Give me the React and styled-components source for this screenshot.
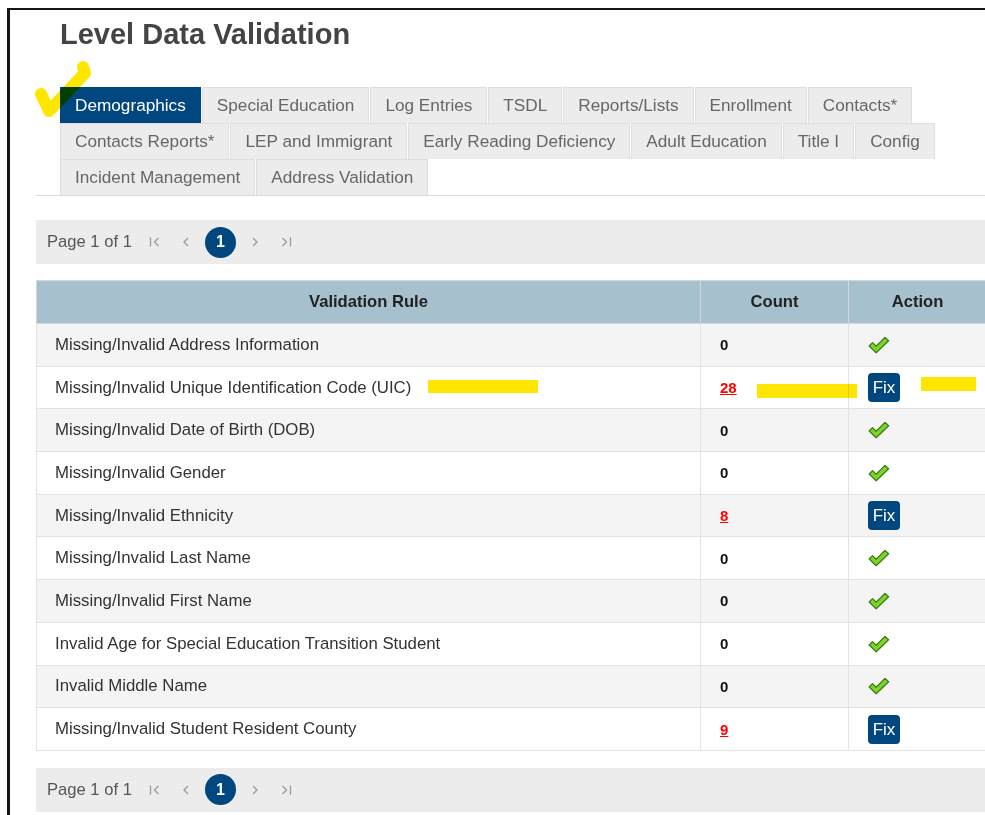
import React from 'react'
import styled, { createGlobalStyle } from 'styled-components'

const tabs = [
    'Demographics', 'Special Education', 'Log Entries', 'TSDL', 'Reports/Lists', 'Enrollment', 'Contacts*',
    'Contacts Reports*', 'LEP and Immigrant', 'Early Reading Deficiency', 'Adult Education', 'Title I', 'Config',
    'Incident Management', 'Address Validation',
]

const rules = [
    { name: 'Missing/Invalid Address Information', count: 0 },
    { name: 'Missing/Invalid Unique Identification Code (UIC)', count: 28 },
    { name: 'Missing/Invalid Date of Birth (DOB)', count: 0 },
    { name: 'Missing/Invalid Gender', count: 0 },
    { name: 'Missing/Invalid Ethnicity', count: 8 },
    { name: 'Missing/Invalid Last Name', count: 0 },
    { name: 'Missing/Invalid First Name', count: 0 },
    { name: 'Invalid Age for Special Education Transition Student', count: 0 },
    { name: 'Invalid Middle Name', count: 0 },
    { name: 'Missing/Invalid Student Resident County', count: 9 },
]

const GlobalStyle = createGlobalStyle`
    body {
        margin: 0;
        background: #fff;
        font-family: "Liberation Sans", Arial, sans-serif;
        overflow: hidden;
    }
`

function FirstIcon() {
    return (
        <svg width="12" height="12" viewBox="0 0 12 12" fill="none" stroke="#9a9a9a" strokeWidth="1.3">
            <path d="M1.5 1.5v9M9.5 2L5.5 6l4 4" />
        </svg>
    )
}
function PrevIcon() {
    return (
        <svg width="8" height="12" viewBox="0 0 8 12" fill="none" stroke="#9a9a9a" strokeWidth="1.3">
            <path d="M6 2L2 6l4 4" />
        </svg>
    )
}
function NextIcon() {
    return (
        <svg width="8" height="12" viewBox="0 0 8 12" fill="none" stroke="#9a9a9a" strokeWidth="1.3">
            <path d="M2 2l4 4-4 4" />
        </svg>
    )
}
function LastIcon() {
    return (
        <svg width="12" height="12" viewBox="0 0 12 12" fill="none" stroke="#9a9a9a" strokeWidth="1.3">
            <path d="M2.5 2l4 4-4 4M10.5 1.5v9" />
        </svg>
    )
}

function CheckIcon() {
    return (
        <svg width="22" height="18" viewBox="0 0 22 18">
            <path d="M1.2 10L4.5 6.6L8.2 10.3L17 1.4L20.6 4.8L8.2 16.8Z"
                fill="#7fd42a" stroke="#3d7d17" strokeWidth="1.3" strokeLinejoin="round" />
        </svg>
    )
}

function Pager() {
    return (
        <PagerBar>
            <PageLabel>Page 1 of 1</PageLabel>
            <PageNav><FirstIcon /></PageNav>
            <PageNav><PrevIcon /></PageNav>
            <PageNumber>1</PageNumber>
            <PageNav><NextIcon /></PageNav>
            <PageNav><LastIcon /></PageNav>
        </PagerBar>
    )
}

export default function App() {
    return (
        <Frame>
            <GlobalStyle />
            <Content>
                <Title>Level Data Validation</Title>
                <TabStrip>
                    {tabs.map((tab, index) =>
                        <Tab key={tab} active={index === 0}>{tab}</Tab>
                    )}
                </TabStrip>
                <Pager />
                <Grid>
                    <colgroup>
                        <col style={{ width: 664 }} />
                        <col style={{ width: 148 }} />
                        <col style={{ width: 138 }} />
                    </colgroup>
                    <thead>
                        <tr>
                            <HeadCell>Validation Rule</HeadCell>
                            <HeadCell>Count</HeadCell>
                            <HeadCell>Action</HeadCell>
                        </tr>
                    </thead>
                    <tbody>
                        {rules.map((rule, index) =>
                            <Row key={rule.name} striped={index % 2 === 0}>
                                <RuleCell>{rule.name}</RuleCell>
                                <CountCell>
                                    {rule.count > 0
                                        ? <CountLink href="#">{rule.count}</CountLink>
                                        : rule.count}
                                </CountCell>
                                <ActionCell>
                                    {rule.count > 0 ? <FixButton>Fix</FixButton> : <CheckIcon />}
                                </ActionCell>
                            </Row>
                        )}
                    </tbody>
                </Grid>
                <Pager />
            </Content>

            {/* highlighter marks drawn over the page */}
            <Marker style={{ left: 23, top: 46 }} width="70" height="66" viewBox="0 0 70 66">
                <path d="M8 38L16 55L52 17L50 11" fill="none" stroke="#ffe600" strokeWidth="12"
                    strokeLinecap="round" strokeLinejoin="round" />
            </Marker>
            <Stroke style={{ left: 418, top: 370, width: 110, height: 13 }} />
            <Stroke style={{ left: 747, top: 374, width: 100, height: 14 }} />
            <Stroke style={{ left: 911, top: 367, width: 55, height: 14 }} />
        </Frame>
    )
}

const Frame = styled.div`
    position: relative;
    margin: 8px 0 0 7px;
    min-height: 807px;
    border-top: 2px solid #151515;
    border-left: 3px solid #151515;
    overflow: hidden;
`
const Content = styled.div`
    padding: 0 0 0 26px;
`
const Title = styled.h1`
    margin: 0 0 0 24px;
    padding-top: 7px;
    font-size: 29px;
    line-height: 34px;
    font-weight: bold;
    color: #444;
`
const TabStrip = styled.div`
    display: flex;
    flex-wrap: wrap;
    margin: 36px 0 24px;
    padding-left: 24px;
    border-bottom: 1px solid #dcdcdc;
`
const Tab = styled.div`
    padding: 8px 14px;
    font-size: 17.2px;
    line-height: 19px;
    color: ${({ active }) => active ? '#fff' : '#666'};
    background: ${({ active }) => active ? '#00467f' : '#ececec'};
    border: 1px solid ${({ active }) => active ? '#00467f' : '#dedede'};
    border-bottom: none;
    margin-right: 1px;
    white-space: nowrap;
`
const PagerBar = styled.div`
    display: flex;
    align-items: center;
    gap: 7px;
    height: 44px;
    padding-left: 11px;
    background: #ececec;
    width: 960px;
`
const PageLabel = styled.span`
    font-size: 16.6px;
    color: #555;
    margin-right: 4px;
`
const PageNav = styled.span`
    display: inline-flex;
    align-items: center;
    justify-content: center;
    width: 24px;
    height: 30px;
`
const PageNumber = styled.span`
    display: inline-flex;
    align-items: center;
    justify-content: center;
    width: 31px;
    height: 31px;
    border-radius: 50%;
    background: #00467f;
    color: #fff;
    font-size: 16px;
    font-weight: bold;
`
const Grid = styled.table`
    width: 950px;
    margin: 16px 0 17px;
    border-collapse: collapse;
    table-layout: fixed;
    border-left: 1px solid #dcdcdc;
`
const HeadCell = styled.th`
    height: 42px;
    padding: 0;
    background: #a7c0cd;
    border: 1px solid #d2d8dc;
    font-size: 16.6px;
    font-weight: bold;
    color: #222;
    text-align: center;
`
const Row = styled.tr`
    background: ${({ striped }) => striped ? '#f4f4f4' : '#fff'};
    td {
        height: 42.7px;
        padding: 0 0 0 19px;
        border: 1px solid #e2e2e2;
        box-sizing: border-box;
    }
`
const RuleCell = styled.td`
    font-size: 16.8px;
    color: #333;
    && {
        padding-left: 18px;
    }
`
const CountCell = styled.td`
    font-size: 15px;
    font-weight: bold;
    color: #111;
`
const CountLink = styled.a`
    color: #f00;
    text-decoration: underline;
`
const ActionCell = styled.td`
    line-height: 0;
`
const FixButton = styled.span`
    display: inline-flex;
    align-items: center;
    justify-content: center;
    width: 32px;
    height: 29px;
    border-radius: 4px;
    background: #00467f;
    color: #fff;
    font-size: 17px;
    line-height: 1;
`
const Marker = styled.svg`
    position: absolute;
    mix-blend-mode: multiply;
`
const Stroke = styled.div`
    position: absolute;
    background: #ffe600;
    mix-blend-mode: multiply;
`
